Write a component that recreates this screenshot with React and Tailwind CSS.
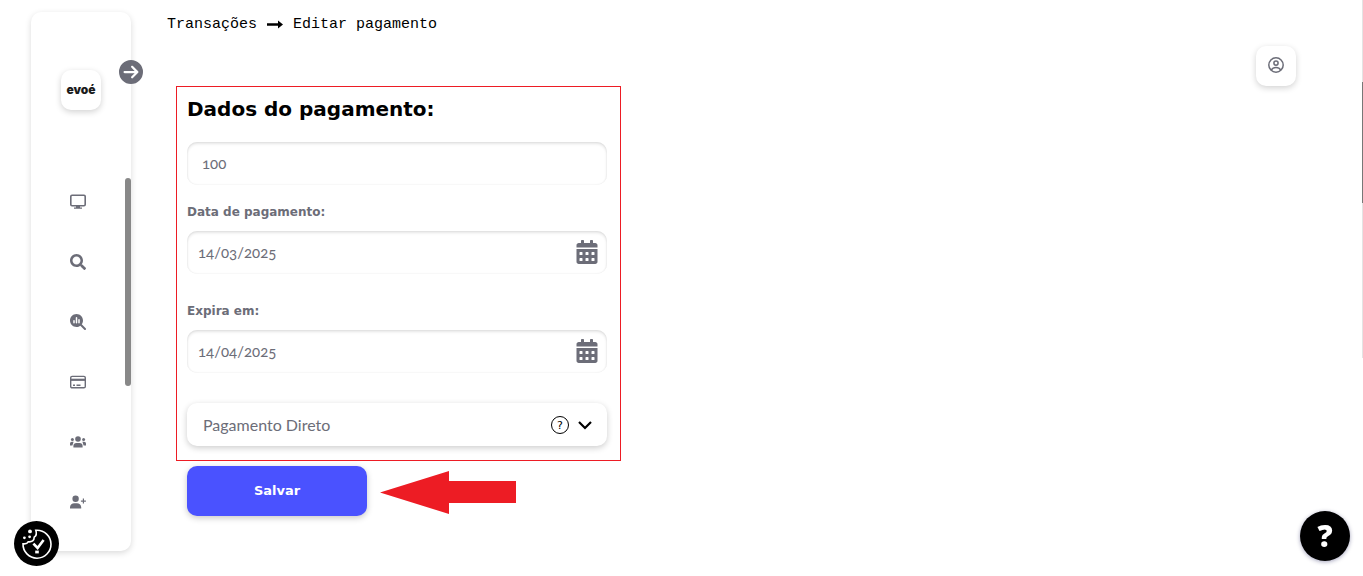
import React, { useState } from 'react';
import { FaSearch, FaCalendarAlt } from 'react-icons/fa';
import { FaMagnifyingGlassChart, FaCircleArrowRight } from 'react-icons/fa6';

const MonitorIcon = () => (
  <svg viewBox="0 0 16 16" className="w-4 h-4" fill="none" stroke="currentColor">
    <rect x="0.8" y="1.3" width="14.4" height="10.4" rx="1.2" strokeWidth="1.6" />
    <path d="M6 12h4v1.4h2v1.4H4v-1.4h2z" fill="currentColor" stroke="none" />
  </svg>
);

const CardIcon = () => (
  <svg viewBox="0 0 16 16" className="w-4 h-4" fill="none" stroke="currentColor">
    <rect x="0.7" y="2.4" width="14.6" height="11.4" rx="1.4" strokeWidth="1.4" />
    <path d="M1 5.8h14" strokeWidth="2.2" />
    <path d="M3 11.2h2M6.5 11.2h4" strokeWidth="1.4" />
  </svg>
);

const GroupIcon = () => (
  <svg viewBox="0 0 16 16" className="w-4 h-4" fill="currentColor">
    <circle cx="8" cy="5" r="2.8" />
    <path d="M3.4 13.5v-1.8A3 3 0 0 1 6.4 8.9h3.2a3 3 0 0 1 3 2.8v1.8z" />
    <circle cx="2.4" cy="5.5" r="1.5" />
    <circle cx="13.6" cy="5.5" r="1.5" />
    <path d="M0 11.4V9.6a1.8 1.8 0 0 1 1.8-1.8H3.6L2.4 11.4zM16 11.4V9.6a1.8 1.8 0 0 0-1.8-1.8h-1.8l1.2 3.6z" />
  </svg>
);

const UserPlusIcon = () => (
  <svg viewBox="0 0 16 16" className="w-4 h-4" fill="currentColor">
    <circle cx="5.6" cy="4.7" r="3.2" />
    <path d="M0 14.5v-1.6a4.4 4.4 0 0 1 4.4-3.6h2.4a4.4 4.4 0 0 1 4.4 3.6v1.6z" />
    <path d="M13.4 4.6v5M10.9 7.1h5" stroke="currentColor" strokeWidth="1.2" />
  </svg>
);

const ProfileIcon = () => (
  <svg viewBox="0 0 16 16" className="w-4 h-4" fill="none" stroke="currentColor" strokeWidth="1.5">
    <circle cx="8" cy="8" r="7.2" />
    <circle cx="8" cy="6.1" r="2.1" />
    <path d="M3.2 13.2c1-1.8 2.6-2.7 4.8-2.7s3.8.9 4.8 2.7" />
  </svg>
);

const CookieIcon = () => (
  <svg viewBox="0 0 45 45" className="w-full h-full" fill="none" stroke="white" strokeWidth="1.6">
    <path d="M22.5 9.2A14 14 0 1 1 9 22.8c2.6.3 4.4-.2 5.2-2 3.8.4 6-1.2 6-4.6 2.2-1.6 2.8-3.6 1.6-7z" />
    <path d="M19.4 22.6l4.2 4.4 6-8" strokeWidth="2.6" />
    <path d="M21.2 31h3.6" strokeWidth="2.8" />
    <g fill="white" stroke="none">
      <circle cx="16" cy="10.4" r="1.9" />
      <circle cx="10.4" cy="16.8" r="1.4" />
      <circle cx="15.6" cy="15.8" r="1.4" />
    </g>
  </svg>
);

const menu = [
  { label: 'Painel', icon: <MonitorIcon /> },
  { label: 'Buscar', icon: <FaSearch className="w-4 h-4" /> },
  { label: 'Relatórios', icon: <FaMagnifyingGlassChart className="w-4 h-4" /> },
  { label: 'Transações', icon: <CardIcon /> },
  { label: 'Grupos', icon: <GroupIcon /> },
  { label: 'Adicionar usuário', icon: <UserPlusIcon /> },
];

const inputClass =
  "block w-full h-[43px] rounded-[10px] bg-white text-[15px] text-[#6c6d78] outline-none shadow-[inset_0_2px_3px_rgba(0,0,0,0.1),inset_0_0_2px_rgba(0,0,0,0.1)] font-['Lato',sans-serif] oldstyle-nums";

const Sidebar = () => (
  <aside className="relative shrink-0 w-[100px] ml-[31px] mt-3 mb-[25px] pt-[58px] rounded-[10px] bg-white shadow-[0_2px_6px_rgba(0,0,0,0.15)]">
    <a
      href="#"
      className="flex items-center justify-center w-10 h-10 mx-auto rounded-[10px] bg-white text-xs font-black text-[#1b1b1b] shadow-[0_2px_6px_rgba(0,0,0,0.18)] font-['Inter',sans-serif]"
    >
      evoé
    </a>
    <button aria-label="Abrir menu" className="absolute top-12 -right-3 rounded-full bg-white text-[#6c6d78]">
      <FaCircleArrowRight className="w-6 h-6" />
    </button>
    <nav className="mt-[62px] pr-1.5">
      {menu.map((item) => (
        <a key={item.label} href="#" aria-label={item.label} className="flex items-center justify-center h-[60px] text-[#6c6d78]">
          {item.icon}
        </a>
      ))}
    </nav>
    <div className="absolute right-0 top-[166px] w-1.5 h-[208px] rounded-full bg-[#888]" />
  </aside>
);

const DateField = ({ id, label, value, onChange }) => (
  <div>
    <label htmlFor={id} className="block mb-[9px] text-xs leading-5 font-bold text-[#6c6d78] font-['DejaVu_Sans',sans-serif]">
      {label}
    </label>
    <div className="relative">
      <input id={id} type="text" value={value} onChange={(e) => onChange(e.target.value)} className={`${inputClass} pl-[11px] pr-12 pb-0.5`} />
      <FaCalendarAlt className="absolute right-2 top-[9px] w-6 h-6 text-[#6c6d78]" />
    </div>
  </div>
);

export default function App() {
  const [amount, setAmount] = useState('100');
  const [paidAt, setPaidAt] = useState('14/03/2025');
  const [expiresAt, setExpiresAt] = useState('14/04/2025');

  return (
    <div className="relative flex min-h-screen bg-white">
      <Sidebar />

      <main className="flex-1 min-w-0 pl-9 pt-[13px]">
        <div className="flex items-center text-[15px] leading-6 text-black font-['Liberation_Mono',monospace]">
          <a href="#">Transações</a>
          <svg viewBox="0 0 16 10" className="w-4 h-2.5 mx-2.5" fill="currentColor">
            <path d="M0 3.2h11V0.400l5 4.100-5 4.100V5.800H0z" />
          </svg>
          <span>Editar pagamento</span>
        </div>

        <form className="mt-[49px] ml-[9px] max-w-[445px]" onSubmit={(e) => e.preventDefault()}>
          <div className="border border-[#ed1c24] pt-2 pb-[14px] pl-2.5 pr-[13px]">
            <h1 className="mb-[19px] text-xl leading-7 font-bold text-black font-['DejaVu_Sans',sans-serif]">
              Dados do pagamento:
            </h1>
            <input
              type="text"
              aria-label="Valor"
              value={amount}
              onChange={(e) => setAmount(e.target.value)}
              className={`${inputClass} mb-[17px] px-[15px] pb-0.5`}
            />
            <div className="flex flex-col gap-[27px]">
              <DateField id="paid-at" label="Data de pagamento:" value={paidAt} onChange={setPaidAt} />
              <DateField id="expires-at" label="Expira em:" value={expiresAt} onChange={setExpiresAt} />
            </div>
            <div className="relative mt-[30px]">
              <select
                aria-label="Forma de pagamento"
                className="block w-full h-[43px] pl-4 pr-16 appearance-none rounded-[10px] bg-white text-base text-[#6c6d78] shadow-[0_2px_6px_rgba(0,0,0,0.2)] font-['Lato',sans-serif]"
              >
                <option>Pagamento Direto</option>
              </select>
              <div className="absolute right-[15px] inset-y-0 flex items-center gap-[9px] text-black pointer-events-none">
                <span className="flex items-center justify-center w-[18px] h-[18px] pt-1 rounded-full border border-black text-[11px] font-['DejaVu_Sans',sans-serif]">
                  ?
                </span>
                <svg viewBox="0 0 14 10" className="w-3.5 h-2.5" fill="none" stroke="currentColor" strokeWidth="2.2">
                  <path d="M1 2l6 6 6-6" />
                </svg>
              </div>
            </div>
          </div>

          <div className="flex items-center gap-[13px] mt-[5px] pl-[11px]">
            <button
              type="submit"
              className="w-[180px] h-[50px] rounded-[10px] bg-[#4a52ff] text-[13px] font-bold text-white shadow-[0_2px_6px_rgba(0,0,0,0.22)] font-['DejaVu_Sans',sans-serif]"
            >
              Salvar
            </button>
            <svg viewBox="0 0 136 46" className="w-[136px] h-[46px]" fill="#ed1c24">
              <path d="M0 24.5L69 3v10h67v22H69v11z" />
            </svg>
          </div>
        </form>
      </main>

      <button
        aria-label="Perfil"
        className="flex shrink-0 items-center justify-center w-10 h-10 mt-[46px] mr-[67px] pb-0.5 rounded-[10px] bg-white text-[#6c6d78] shadow-[0_2px_6px_rgba(0,0,0,0.18)]"
      >
        <ProfileIcon />
      </button>

      <div className="absolute right-0 top-0 w-px h-[358px] pt-[82px] bg-[#e4e4e4]">
        <div className="h-[121px] bg-[#777]" />
      </div>

      <button aria-label="Cookies" className="fixed left-3.5 bottom-2.5 w-[45px] h-[45px] rounded-full bg-black">
        <CookieIcon />
      </button>
      <button
        aria-label="Ajuda"
        className="fixed right-[13px] bottom-[15px] flex items-center justify-center w-[50px] h-[50px] rounded-full bg-black text-3xl font-extrabold text-white shadow-[0_1px_4px_rgba(30,30,90,0.4)] font-['Open_Sans',sans-serif]"
      >
        ?
      </button>
    </div>
  );
}
